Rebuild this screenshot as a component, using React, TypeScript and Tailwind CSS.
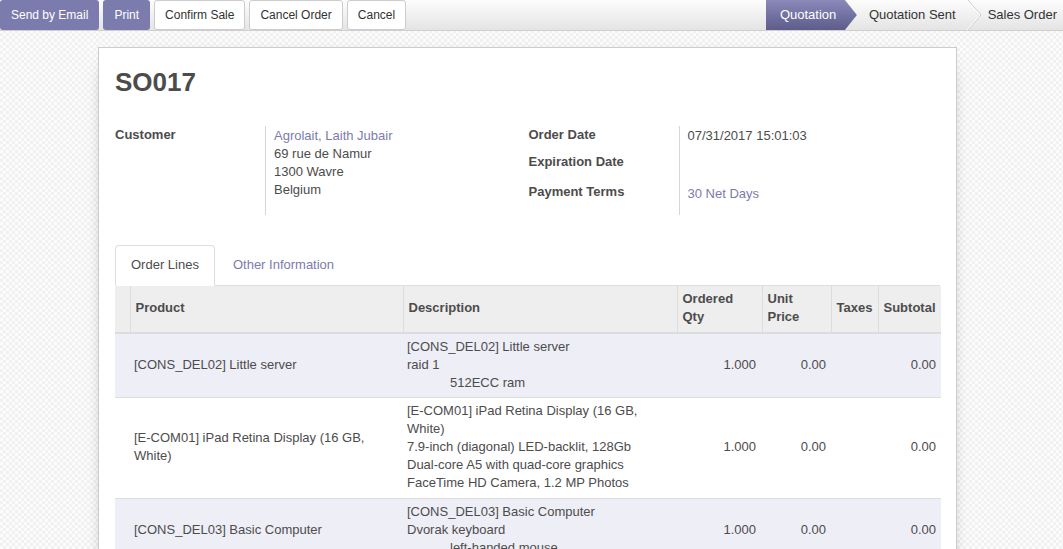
import React from "react";

const rows = [
  {
    product: ["[CONS_DEL02] Little server"],
    desc: [
      { t: "[CONS_DEL02] Little server" },
      { t: "raid 1" },
      { t: "512ECC ram", indent: true },
    ],
    stripe: true,
    tall: false,
  },
  {
    product: ["[E-COM01] iPad Retina Display (16 GB,", "White)"],
    desc: [
      { t: "[E-COM01] iPad Retina Display (16 GB," },
      { t: "White)" },
      { t: "7.9-inch (diagonal) LED-backlit, 128Gb" },
      { t: "Dual-core A5 with quad-core graphics" },
      { t: "FaceTime HD Camera, 1.2 MP Photos" },
    ],
    stripe: false,
    tall: true,
  },
  {
    product: ["[CONS_DEL03] Basic Computer"],
    desc: [
      { t: "[CONS_DEL03] Basic Computer" },
      { t: "Dvorak keyboard" },
      { t: "left-handed mouse", indent: true },
    ],
    stripe: true,
    tall: false,
  },
  {
    product: ["[CONS_DEL01] Server"],
    desc: [{ t: "[CONS_DEL01] Server" }],
    stripe: false,
    tall: false,
  },
];

export default function App() {
  return (
    <div
      className="h-[549px] overflow-hidden text-[13px] leading-[18px] text-[#4c4c4c] bg-[#f8f8f8] bg-[image:repeating-conic-gradient(#f1f1f1_0_25%,#fcfcfc_0_50%)] bg-[length:6px_6px]"
      style={{ fontFamily: '"Liberation Sans", Arial, sans-serif' }}
    >
      {/* Control panel */}
      <div className="flex h-[31px] items-start justify-between border-b border-[#cfcfcf] bg-gradient-to-b from-[#fdfdfd] to-[#e4e4e4]">
        <div className="flex gap-[4px] text-[12px]">
          <button className="h-[30px] rounded-[3px] bg-[#7c7bad] px-[11px] text-white">Send by Email</button>
          <button className="h-[30px] rounded-[3px] bg-[#7c7bad] px-[11px] text-white">Print</button>
          <button className="h-[30px] rounded-[3px] border border-[#cccccc] bg-white px-[10px] text-[#333]">Confirm Sale</button>
          <button className="h-[30px] rounded-[3px] border border-[#cccccc] bg-white px-[10px] text-[#333]">Cancel Order</button>
          <button className="h-[30px] rounded-[3px] border border-[#cccccc] bg-white px-[10px] text-[#333]">Cancel</button>
        </div>
        <div className="flex h-[30px] items-center">
          <div
            className="flex h-[30px] w-[91px] items-center bg-gradient-to-b from-[#8a89b9] to-[#5d5c8b] pl-[14px] text-white"
            style={{ clipPath: "polygon(0 0, 79px 0, 91px 50%, 79px 100%, 0 100%)" }}
          >
            Quotation
          </div>
          <div className="ml-[12px] text-[#333]">Quotation Sent</div>
          <svg width="22" height="30" viewBox="0 0 22 30" className="ml-[6px]">
            <polyline points="6,0 19,15 6,30" fill="none" stroke="#cacaca" strokeWidth="1" />
            <polyline points="5,0 18,15 5,30" fill="none" stroke="#ffffff" strokeWidth="1" />
          </svg>
          <div className="ml-[4px] pr-[6px] text-[#333]">Sales Order</div>
        </div>
      </div>

      {/* Sheet */}
      <div className="ml-[98px] mt-[16px] w-[859px] border border-[#cccccc] bg-white px-[16px] pb-[40px] shadow-[0_5px_20px_-15px_#000]">
        <h1 className="pt-[19px] text-[26px] font-bold leading-[30px] text-[#4c4c4c]">SO017</h1>

        <div className="mt-[29px] grid grid-cols-2">
          {/* Left group */}
          <div className="flex">
            <div className="w-[150px] font-bold">Customer</div>
            <div className="border-l border-[#d6d6d6] pb-[16px] pl-[8px] pt-[1px]">
              <div className="text-[#7c7bad]">Agrolait, Laith Jubair</div>
              <div>69 rue de Namur</div>
              <div>1300 Wavre</div>
              <div>Belgium</div>
            </div>
          </div>
          {/* Right group */}
          <div className="flex pl-[1px]">
            <div className="w-[150px] font-bold">
              <div className="h-[27px]">Order Date</div>
              <div className="h-[30px]">Expiration Date</div>
              <div className="h-[28px]">Payment Terms</div>
            </div>
            <div className="border-l border-[#d6d6d6] pl-[8px]">
              <div className="h-[27px] pt-[1px]">07/31/2017 15:01:03</div>
              <div className="h-[30px]"></div>
              <div className="h-[28px] pt-[2px] text-[#7c7bad]">30 Net Days</div>
            </div>
          </div>
        </div>

        {/* Tabs */}
        <div className="mt-[30px] flex border-b border-[#dddddd]">
          <div className="-mb-px rounded-t-[4px] border border-b-white border-[#dddddd] bg-white px-[15px] py-[10px] text-[#4c4c4c]">
            Order Lines
          </div>
          <div className="px-[18px] py-[11px] text-[#7c7bad]">Other Information</div>
        </div>

        {/* Table */}
        <table className="w-[826px] table-fixed border-collapse">
          <colgroup>
            <col className="w-[15px]" />
            <col className="w-[273px]" />
            <col className="w-[274px]" />
            <col className="w-[85px]" />
            <col className="w-[69px]" />
            <col className="w-[47px]" />
            <col className="w-[63px]" />
          </colgroup>
          <thead>
            <tr className="border-b-2 border-[#dcdcdc] bg-[#eeeeee] font-bold">
              <th className="pb-[6px] pt-[4px]"></th>
              <th className="border-l border-[#dddddd] px-[5px] pb-[6px] pt-[4px] text-left">Product</th>
              <th className="border-l border-[#dddddd] px-[5px] pb-[6px] pt-[4px] text-left">Description</th>
              <th className="border-l border-[#dddddd] px-[5px] pb-[6px] pt-[4px] text-left">
                Ordered
                <br />
                Qty
              </th>
              <th className="border-l border-[#dddddd] px-[5px] pb-[6px] pt-[4px] text-left">
                Unit
                <br />
                Price
              </th>
              <th className="border-l border-[#dddddd] px-[5px] pb-[6px] pt-[4px] text-left">Taxes</th>
              <th className="border-l border-[#dddddd] px-[5px] pb-[6px] pt-[4px] text-left">Subtotal</th>
            </tr>
          </thead>
          <tbody>
            {rows.map((r, i) => {
              const pad = r.tall ? "pt-[4px] pb-[6px]" : "pt-[4px] pb-[5px]";
              return (
                <tr key={i} className={`border-t border-[#dddddd] ${r.stripe ? "bg-[#eeeef6]" : "bg-white"}`}>
                  <td></td>
                  <td className={`px-[4px] align-middle ${pad}`}>
                    {r.product.map((p, j) => (
                      <div key={j}>{p}</div>
                    ))}
                  </td>
                  <td className={`px-[4px] align-middle ${pad}`}>
                    {r.desc.map((d, j) => (
                      <div key={j} className={d.indent ? "pl-[43px]" : ""}>
                        {d.t}
                      </div>
                    ))}
                  </td>
                  <td className={`px-[6px] text-right align-middle ${pad}`}>1.000</td>
                  <td className={`px-[5px] text-right align-middle ${pad}`}>0.00</td>
                  <td className={`px-[5px] text-right align-middle ${pad}`}></td>
                  <td className={`px-[5px] text-right align-middle ${pad}`}>0.00</td>
                </tr>
              );
            })}
          </tbody>
        </table>
      </div>
    </div>
  );
}
